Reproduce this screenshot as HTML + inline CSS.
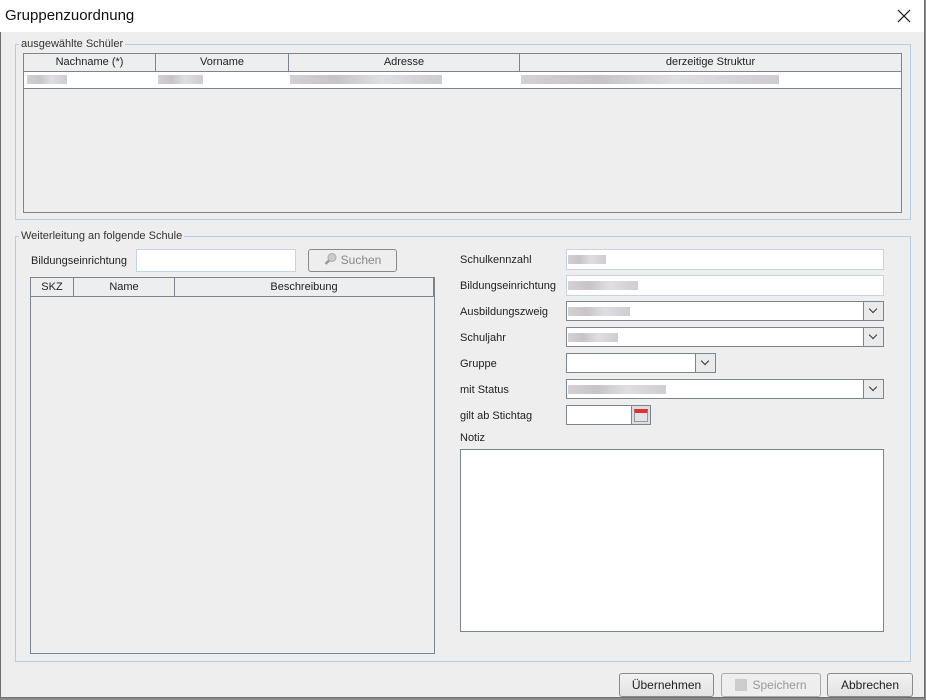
<!DOCTYPE html>
<html><head><meta charset="utf-8"><style>
*{box-sizing:border-box;margin:0;padding:0}
body{width:926px;height:700px;background:#8a8a8a;font-family:"Liberation Sans",Arial,sans-serif;font-size:11px;color:#222;position:relative;overflow:hidden}
.a{position:absolute}
#win{left:0;top:0;width:925px;height:698px;background:#eeeeee;border:1px solid #6e6e6e;border-top:none}
#title{left:0;top:0;width:924px;height:32px;background:#fff}
.grp{border:1px solid #b3cde3}
.lg{background:#eee;padding:0 2px;color:#333;font-size:11px;line-height:12px}
.tbl{border:1px solid #7a8590;background:#eee}
.hd{background:#eee;border-bottom:1px solid #7a8590;text-align:center;line-height:17px;font-size:11px}
.hd div{position:absolute;top:0;height:100%;border-right:1px solid #7a8590;text-align:center}
.blur{position:absolute;height:9px;background:linear-gradient(90deg,#c9c4cc,#b9b5bb 30%,#d8d6da 60%,#c3bfc5);opacity:.8}
.inp{background:#fff;border:1px solid #c2d4e6}
.cb{background:#fff;border:1px solid #7a8590}
.dd{position:absolute;right:0;top:0;width:20px;height:100%;border-left:1px solid #7a8590;background:#eaeaea}
.dd:after{content:"";position:absolute;left:6px;top:4px;width:5px;height:5px;border-right:1px solid #333;border-bottom:1px solid #333;transform:rotate(45deg)}
.lbl{font-size:11px;color:#222}
.btn{border:1px solid #8a8a8a;border-radius:3px;background:linear-gradient(#f2f2f2,#e2e2e2);text-align:center;line-height:20px;font-size:12px}
</style></head><body>
<div id="win" class="a"></div>
<div id="title" class="a"></div>
<div class="a" style="left:5px;top:7px;font-size:15px;color:#111">Gruppenzuordnung</div>
<svg class="a" style="left:897px;top:9px" width="14" height="14"><path d="M1 1L13 13M13 1L1 13" stroke="#111" stroke-width="1.2"/></svg>

<div class="a grp" style="left:15px;top:44px;width:896px;height:176px"></div>
<div class="a lg" style="left:19px;top:38px">ausgewählte Schüler</div>
<div class="a tbl" style="left:23px;top:53px;width:879px;height:160px">
 <div class="a hd" style="left:0;top:0;width:877px;height:18px">
  <div style="left:0;width:132px">Nachname (*)</div>
  <div style="left:132px;width:133px">Vorname</div>
  <div style="left:265px;width:231px">Adresse</div>
  <div style="left:496px;width:381px;border-right:none">derzeitige Struktur</div>
 </div>
 <div class="a" style="left:0;top:18px;width:877px;height:17px;background:#fff;border-bottom:1px solid #7a8590"></div>
 <div class="blur" style="left:3px;top:21px;width:40px"></div>
 <div class="blur" style="left:134px;top:21px;width:45px"></div>
 <div class="blur" style="left:266px;top:21px;width:152px"></div>
 <div class="blur" style="left:497px;top:21px;width:258px"></div>
</div>

<div class="a grp" style="left:15px;top:236px;width:896px;height:426px"></div>
<div class="a lg" style="left:19px;top:230px">Weiterleitung an folgende Schule</div>
<div class="a lbl" style="left:31px;top:255px">Bildungseinrichtung</div>
<div class="a inp" style="left:136px;top:249px;width:160px;height:23px"></div>
<div class="a btn" style="left:308px;top:249px;width:89px;height:23px;color:#888;background:#eee"><svg width="14" height="14" style="vertical-align:-2px;margin-right:3px"><circle cx="8" cy="5.5" r="4" fill="#ccc" stroke="#aaa"/><path d="M5 8.5L1.5 12" stroke="#999" stroke-width="2.5"/></svg>Suchen</div>
<div class="a tbl" style="left:30px;top:277px;width:405px;height:377px">
 <div class="a hd" style="left:0;top:0;width:403px;height:19px;line-height:18px">
  <div style="left:0;width:43px">SKZ</div>
  <div style="left:43px;width:101px">Name</div>
  <div style="left:144px;width:259px">Beschreibung</div>
 </div>
</div>

<div class="a lbl" style="left:460px;top:254px">Schulkennzahl</div>
<div class="a inp" style="left:566px;top:249px;width:318px;height:21px"></div><div class="blur" style="left:568px;top:255px;width:38px"></div>
<div class="a lbl" style="left:460px;top:280px">Bildungseinrichtung</div>
<div class="a inp" style="left:566px;top:275px;width:318px;height:21px"></div><div class="blur" style="left:568px;top:281px;width:70px"></div>
<div class="a lbl" style="left:460px;top:306px">Ausbildungszweig</div>
<div class="a cb" style="left:566px;top:301px;width:318px;height:20px"><div class="dd"></div></div><div class="blur" style="left:568px;top:307px;width:62px"></div>
<div class="a lbl" style="left:460px;top:332px">Schuljahr</div>
<div class="a cb" style="left:566px;top:327px;width:318px;height:20px"><div class="dd"></div></div><div class="blur" style="left:568px;top:333px;width:50px"></div>
<div class="a lbl" style="left:460px;top:358px">Gruppe</div>
<div class="a cb" style="left:566px;top:353px;width:150px;height:20px"><div class="dd"></div></div>
<div class="a lbl" style="left:460px;top:384px">mit Status</div>
<div class="a cb" style="left:566px;top:379px;width:318px;height:20px"><div class="dd"></div></div><div class="blur" style="left:568px;top:385px;width:98px"></div>
<div class="a lbl" style="left:460px;top:410px">gilt ab Stichtag</div>
<div class="a cb" style="left:566px;top:405px;width:66px;height:20px"></div>
<div class="a" style="left:631px;top:405px;width:20px;height:20px;border:1px solid #7a8590;background:#ddd">
 <div class="a" style="left:2px;top:3px;width:14px;height:13px;background:#e4e4e4;border:1px solid #999;border-top:4px solid #d33"></div>
</div>
<div class="a lbl" style="left:460px;top:432px">Notiz</div>
<div class="a inp" style="left:460px;top:449px;width:424px;height:183px;border-color:#7a8590"></div>

<div class="a btn" style="left:619px;top:673px;width:95px;height:24px;line-height:22px">Übernehmen</div>
<div class="a btn" style="left:721px;top:673px;width:100px;height:24px;line-height:22px;color:#999;background:#eee;border-color:#aaa"><span style="display:inline-block;width:12px;height:12px;background:#ccc;vertical-align:-2px;margin-right:5px"></span>Speichern</div>
<div class="a btn" style="left:827px;top:673px;width:86px;height:24px;line-height:22px">Abbrechen</div>
</body></html>
